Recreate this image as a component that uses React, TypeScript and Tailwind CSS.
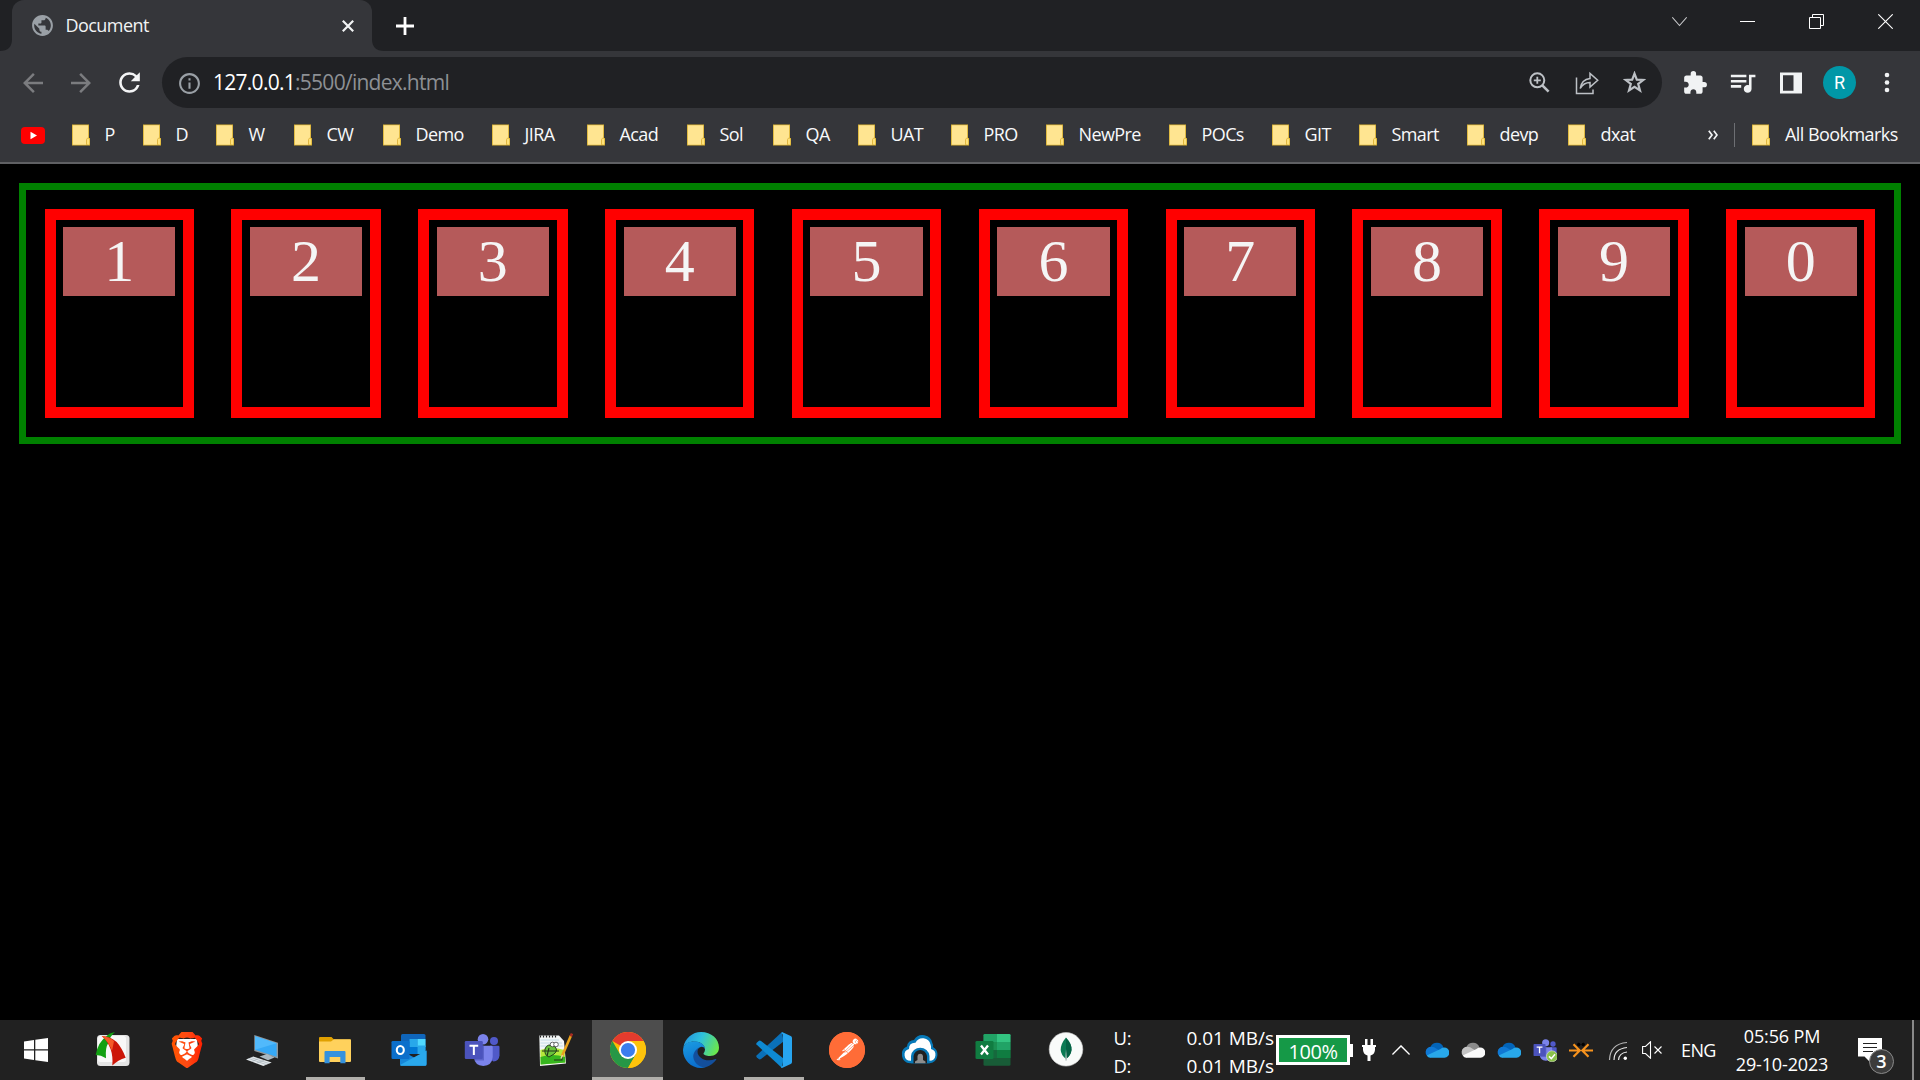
import React from "react";
import {
  MdPublic, MdRefresh, MdArrowBack, MdArrowForward, MdInfoOutline,
  MdExtension, MdQueueMusic,
} from "react-icons/md";
import { SiBrave, SiPostman } from "react-icons/si";

const FolderIcon = () => (
  <svg className="block h-[22px] w-[18px] shrink-0" viewBox="0 0 18 22">
    <path d="M0 0.5H17V14H18V21.5H0Z" fill="#d9b02f" />
    <path d="M0.8 1.3H16.2V15L14.5 16V20.7H0.8Z" fill="#ffe591" />
    <rect x="15" y="14.5" width="2.3" height="6.2" rx="1" fill="#ffe27a" />
    <path d="M14.5 20.5V15.5Q14.8 14 16.5 14" stroke="#e0b43c" fill="none" strokeWidth="0.9" />
  </svg>
);

const bookmarks: { label: string; slot: string }[] = [
  { label: "P", slot: "w-[71px]" },
  { label: "D", slot: "w-[73px]" },
  { label: "W", slot: "w-[78px]" },
  { label: "CW", slot: "w-[89px]" },
  { label: "Demo", slot: "w-[109px]" },
  { label: "JIRA", slot: "w-[95px]" },
  { label: "Acad", slot: "w-[100px]" },
  { label: "Sol", slot: "w-[86px]" },
  { label: "QA", slot: "w-[85px]" },
  { label: "UAT", slot: "w-[93px]" },
  { label: "PRO", slot: "w-[95px]" },
  { label: "NewPre", slot: "w-[123px]" },
  { label: "POCs", slot: "w-[103px]" },
  { label: "GIT", slot: "w-[87px]" },
  { label: "Smart", slot: "w-[108px]" },
  { label: "devp", slot: "w-[101px]" },
  { label: "dxat", slot: "w-[100px]" },
];

function TabStrip() {
  return (
    <div className="flex h-[51px] bg-[#202124]">
      <svg className="block h-[51px] w-[12px]" viewBox="0 0 12 51"><path d="M12 51H0Q12 51 12 39Z" fill="#35363a" /></svg>
      <div className="flex h-[51px] w-[360px] items-center rounded-t-[12px] bg-[#35363a] pl-[17.5px]">
        <MdPublic className="size-[25px] text-[#9aa0a6]" />
        <span className="ml-[11px] w-[276px] pb-[1px] text-[18px] leading-none tracking-[-0.55px] text-[#f1f3f4]">Document</span>
        <svg className="block size-[12px]" viewBox="0 0 12 12"><path d="M0.8 0.8L11.2 11.2M11.2 0.8L0.8 11.2" stroke="#f1f3f4" strokeWidth="2.2" /></svg>
      </div>
      <svg className="block h-[51px] w-[12px]" viewBox="0 0 12 51"><path d="M0 51H12Q0 51 0 39Z" fill="#35363a" /></svg>
      <svg className="mt-[17px] ml-[12px] block size-[18px]" viewBox="0 0 18 18"><path d="M9 0V18M0 9H18" stroke="#fff" strokeWidth="2.8" /></svg>
      <svg className="mt-[14px] ml-[1258px] block size-[15px]" viewBox="0 0 15 15"><path d="M0.3 3.3L7.5 11.5L14.7 3.3" stroke="#c9cacc" strokeWidth="1.1" fill="none" /></svg>
      <svg className="mt-[14px] ml-[53px] block size-[15px]" viewBox="0 0 15 15"><path d="M0 7.5H15" stroke="#fff" /></svg>
      <svg className="mt-[14px] ml-[54px] block size-[15px]" viewBox="0 0 15 15"><path d="M0.5 3.5H11.5V14.5H0.5ZM3.5 3.5V0.5H14.5V11.5H11.5" stroke="#fff" fill="none" /></svg>
      <svg className="mt-[14px] ml-[54px] block size-[15px]" viewBox="0 0 15 15"><path d="M0.3 0.3L14.7 14.7M14.7 0.3L0.3 14.7" stroke="#fff" strokeWidth="1.1" /></svg>
    </div>
  );
}

function Toolbar() {
  return (
    <div className="flex h-[63px] items-center bg-[#35363a]">
      <MdArrowBack className="ml-[18px] size-[30px] text-[#7b7c7f]" />
      <MdArrowForward className="ml-[18px] size-[30px] text-[#7b7c7f]" />
      <MdRefresh className="ml-[18px] size-[31px] text-[#f4f5f6]" />
      <div className="ml-[17px] flex h-[51px] w-[1500px] items-center rounded-full bg-[#202124] pl-[15px]">
        <MdInfoOutline className="mt-[2px] size-[25px] text-[#9aa0a6]" />
        <div className="ml-[11px] w-[1315.5px] text-[21px] leading-none tracking-[-0.73px] text-[#8d9094]">
          <span className="text-white">127.0.0.1</span>:5500/index.html
        </div>
        <svg className="block size-[21px]" viewBox="0 0 21 21" fill="none" stroke="#bdc1c6">
          <circle cx="8.3" cy="8.300" r="7" strokeWidth="2" />
          <path d="M8.300 4.800V11.800M4.800 8.300H11.800" strokeWidth="1.800" />
          <path d="M13.300 13.300L19.600 19.600" strokeWidth="2.600" />
        </svg>
        <svg className="ml-[25px] block size-[24px]" viewBox="0 0 24 24" fill="none" stroke="#bdc1c6" strokeWidth="1.5">
          <path d="M1.5 6.500V22.500H18V18.500" />
          <path d="M5.200 17.500Q6.500 8.500 15 7.500V2.500L22.700 9.300L15 16V11.500Q8.500 11.500 5.200 17.500Z" />
        </svg>
        <svg className="ml-[24.500px] block size-[23px]" viewBox="0 0 23 23" fill="none" stroke="#bdc1c6" strokeWidth="2.200">
          <path d="M11.500 2.600L13.800 8.700L20.300 9L15.200 13L17 19.400L11.500 15.800L6 19.400L7.800 13L2.700 9L9.200 8.700Z" />
        </svg>
      </div>
      <MdExtension className="ml-[20px] size-[26px] text-[#f1f3f4]" />
      <MdQueueMusic className="ml-[19px] size-[31px] text-[#f1f3f4]" />
      <svg className="ml-[22px] block size-[22px]" viewBox="0 0 22 22"><path d="M0 0.5H22V21.5H0ZM3 3.2V18.8H13.5V3.2Z" fill="#f1f3f4" fillRule="evenodd" /></svg>
      <div className="ml-[21px] flex size-[33px] items-center justify-center rounded-full bg-[#0097a7] font-['Roboto'] text-[18px] leading-none text-white">R</div>
      <svg className="ml-[28px] block h-[21px] w-[6px]" viewBox="0 0 6 21" fill="#f1f3f4"><circle cx="3" cy="3" r="2.3" /><circle cx="3" cy="10.5" r="2.3" /><circle cx="3" cy="18" r="2.3" /></svg>
    </div>
  );
}

function BookmarksBar() {
  return (
    <div className="flex h-[50px] items-center border-b-2 border-[#5f6063] bg-[#35363a] pb-[6px] text-[18px] leading-none text-[#f8f9fa]">
      <svg className="ml-[21px] block h-[17px] w-[24px]" viewBox="0 0 24 17"><rect width="24" height="17" rx="4" fill="#f00" /><path d="M9.5 4.8V12.2L16 8.5Z" fill="#fff" /></svg>
      <div className="ml-[27px] flex">
        {bookmarks.map((b) => (
          <div key={b.label} className={`flex shrink-0 items-center gap-[14.500px] tracking-[-0.6px] whitespace-nowrap ${b.slot}`}>
            <FolderIcon />
            <span className="pb-[2px]">{b.label}</span>
          </div>
        ))}
      </div>
      <svg className="ml-[40px] block h-[10px] w-[10px]" viewBox="0 0 10 10"><path d="M0.8 0.8L4 5L0.8 9.2M5.8 0.8L9 5L5.8 9.2" stroke="#f1f3f4" strokeWidth="1.7" fill="none" /></svg>
      <div className="ml-[16px] h-[24px] w-px bg-[#6d6f73]" />
      <div className="ml-[17px] flex items-center gap-[15px] tracking-[-0.55px] whitespace-nowrap"><FolderIcon /><span className="pb-[2px]">All Bookmarks</span></div>
    </div>
  );
}

function PageContent() {
  return (
    <main className="flex-1 bg-black px-[18.75px] pt-[19px]">
      <div className="flex h-[261px] border-[7px] border-[#008000]">
        {["1", "2", "3", "4", "5", "6", "7", "8", "9", "0"].map((n) => (
          <div key={n} className="m-[18.75px] h-[209px] flex-1 border-[11px] border-[#ff0000] p-[7.5px]">
            <div className="h-[69px] bg-[#b55a5a] text-center font-['Liberation_Serif'] text-[60px] leading-[69px] text-[#f5f5f5]">{n}</div>
          </div>
        ))}
      </div>
    </main>
  );
}

const box = "block size-[36px]";

const FastStone = () => (
  <svg className={box} viewBox="0 0 36 36">
    <rect x="2" y="3" width="32.5" height="31" rx="3.5" fill="#e4e4e4" />
    <rect x="3" y="4" width="28" height="26" rx="2.5" fill="#f8f8f8" />
    <path d="M0.7 23Q3 10 11.7 4Q14 1 20 0Q15 4 13.3 11Q10 16 11 26.3Q6 23 0.7 23Z" fill="#12a012" />
    <path d="M6.7 4Q15 4 21.7 10Q27 16 30.7 25.7Q23 28 17.3 33.5Q19 15 6.7 4Z" fill="#cc1608" />
    <path d="M6.7 4Q14 4.500 19 9L17 19Q14 10 6.700 4Z" fill="#f55a28" />
  </svg>
);
const Brave = () => (
  <div className="grid size-[36px] place-items-center">
    <svg className="col-start-1 row-start-1 block size-[36px]" viewBox="0 0 36 36">
      <defs><linearGradient id="brave"><stop stopColor="#ff5500" /><stop offset="0.5" stopColor="#ff4a14" /><stop offset="1" stopColor="#ff2000" /></linearGradient></defs>
      <path d="M8 7H28L29 16L24 26L18 30L12 26L7 16Z" fill="#fff" />
    </svg>
    <SiBrave className="col-start-1 row-start-1 size-[36px]" fill="url(#brave)" />
  </div>
);
const Computer = () => (
  <svg className={box} viewBox="0 0 36 36">
    <path d="M10.300 3L34 10.700V26.600L10.300 18.900Z" fill="#8f979c" />
    <path d="M11 4.300L32.600 11.300V24.700L11 17.800Z" fill="#36a9f6" />
    <path d="M11 4.300L32.600 11.300L11 17.800Z" fill="#51b9fb" />
    <path d="M15.500 24.500L23 22L30.500 25.500L24 28.300Z" fill="#aab9c2" />
    <path d="M2 27.500L9.300 24.500L27.700 30.500L19.300 34Z" fill="#e4e9ec" />
    <path d="M4.500 26.500L22 32.500M7 25.500L25 31.500M8 29.500L14.500 26.500M13 31L20 28.300" stroke="#9daab2" strokeWidth="0.600" />
  </svg>
);
const Explorer = () => (
  <svg className={box} viewBox="0 0 36 36">
    <path d="M2 6Q2 5 3 5H14.500L17 7.500H33Q34 7.500 34 8.500V12H2Z" fill="#e0a000" />
    <path d="M2 9.500H14L17 7.200H33Q34 7.200 34 8.200V29Q34 30 33 30H3Q2 30 2 29Z" fill="#ffd15c" />
    <path d="M7.500 31.300V20Q7.500 19 8.500 19H27.500Q28.500 19 28.500 20V31.300H23.300V25H12.600V31.300Z" fill="#3592dd" />
  </svg>
);
const Outlook = () => (
  <svg className={box} viewBox="0 0 36 36">
    <rect x="10" y="2" width="24.500" height="20" rx="1.500" fill="#0f65ba" />
    <path d="M18.500 7H26.500V15H18.500Z" fill="#28a8ea" /><path d="M26.500 7H34.500V15H26.500Z" fill="#50d9ff" />
    <path d="M18.500 15H26.500V22H18.500Z" fill="#0078d4" /><path d="M26.500 13.500H34.500V22H26.500Z" fill="#28a8ea" />
    <path d="M9 18L26 27L35.500 18.500V32.300Q35.500 33.800 34 33.800H10.500Q9 33.800 9 32.300Z" fill="#1687d9" />
    <path d="M9 33L35.500 18.500V32.300Q35.500 33.800 34 33.800H10Z" fill="#2aa8ec" />
    <rect x="0.500" y="9" width="18" height="18" rx="1.300" fill="#0c6fcb" />
    <ellipse cx="9.300" cy="18" rx="3.500" ry="4" stroke="#fff" strokeWidth="2.100" fill="none" />
  </svg>
);
const TeamsShape = () => (
  <>
    <circle cx="19" cy="7.300" r="5.300" fill="#7b83eb" />
    <circle cx="30" cy="9" r="4" fill="#5059c9" />
    <path d="M26 13.700H34.300Q35.500 13.700 35.500 15V23.500Q35 29 29.500 29.500L26 27Z" fill="#5059c9" />
    <path d="M10 13.700H27.500Q28.700 13.700 28.700 15V25Q28 33.500 19.300 34Q10.500 33.500 10 25Z" fill="#7b83eb" />
    <path d="M10 13.700H20V28.500H11Z" fill="#5c64ca" />
    <rect x="0.800" y="9" width="18" height="18" rx="1.300" fill="#4b53bc" />
    <path d="M5.500 13.700H14.200M9.850 13.700V23" stroke="#fff" strokeWidth="2" />
  </>
);
const Teams = () => <svg className={box} viewBox="0 0 36 36"><TeamsShape /></svg>;
const Notepad = () => (
  <svg className={box} viewBox="0 0 36 36">
    <path d="M2.300 3.500H22L27 9L29 31.500L3 34Z" fill="#f3f7f7" />
    <path d="M3.500 8H22M3.500 11H25M3.500 14H26" stroke="#b9d5e2" strokeWidth="0.800" />
    <path d="M3.300 18Q14 14 27.500 18L28.300 30.500L3.700 32.600Z" fill="#b4e83a" />
    <path d="M3.500 25Q15 21 28 25L28.300 30.500L3.700 32.600Z" fill="#36b51e" />
    <path d="M8 17Q10 11 17 14Q22 18 17 22L12 25Q7 23 8 17Z" fill="#6ac23a" stroke="#24451b" strokeWidth="1" />
    <path d="M5 19H22M12 16L10 24M17 28H25V25" stroke="#24351b" strokeWidth="1.100" fill="none" />
    <circle cx="15.500" cy="12.500" r="2.300" fill="#fff" stroke="#333" strokeWidth="0.700" /><circle cx="19" cy="12.500" r="2.300" fill="#fff" stroke="#333" strokeWidth="0.700" />
    <path d="M3.500 3.500V5.500M6.500 3.500V5.500M9.500 3.500V5.500M12.500 3.500V5.500M15.500 3.500V5.500M18.500 3.500V5.500" stroke="#222" strokeWidth="1.200" />
    <path d="M34 3.500L25 24" stroke="#e8a21c" strokeWidth="2.600" /><path d="M35 1.500L33.700 4.400" stroke="#a82d22" strokeWidth="2.600" /><path d="M25.500 23L24 26.500" stroke="#e8cfa0" strokeWidth="1.500" />
  </svg>
);
const Chrome = () => (
  <svg className={box} viewBox="0 0 36 36">
    <circle cx="18" cy="18" r="18" fill="#fbbc05" />
    <path d="M18 18L2.410 9A18 18 0 0 1 33.590 9Z" fill="#e33b2e" />
    <path d="M10.200 22.500L2.410 9A18 18 0 0 0 18 36L25.800 22.500Z" fill="#269746" />
    <path d="M18 9H33.590A18 18 0 0 1 18 36L25.800 22.500Z" fill="#fdc30c" />
    <circle cx="18" cy="18" r="9" fill="#fff" /><circle cx="18" cy="18" r="7.100" fill="#3b7ded" />
  </svg>
);
const Edge = () => (
  <svg className={box} viewBox="0 0 36 36">
    <defs>
      <linearGradient id="edgeTop" x1="0" y1="0.300" x2="1" y2="0.600"><stop stopColor="#2394dd" /><stop offset="0.450" stopColor="#2fc2dc" /><stop offset="1" stopColor="#6be84a" /></linearGradient>
      <linearGradient id="edgeLeft" x1="0" y1="0" x2="0.300" y2="1"><stop stopColor="#1b9de2" /><stop offset="1" stopColor="#0b6fce" /></linearGradient>
    </defs>
    <path d="M0.300 15.500C2 6 9.500 0 18 0C28.500 0 36 7 36 15.500C36 21 32 24 27 24C23 24 20.500 22.700 20.500 21.500C20.500 20.800 22 20 22 17.500C22 13 17 9.500 11.500 9.500C6 9.500 2 12 0.300 15.500Z" fill="url(#edgeTop)" />
    <path d="M0 18C0.500 12 5.500 9.300 11.300 9.300C17 9.300 22 13 22 17Q21 14.800 18.500 14.800C14.500 15.500 11.500 20 12 25C12.500 30 16.500 34.500 22.500 35.300Q20 36 18 36C8 36 0 28 0 18Z" fill="url(#edgeLeft)" />
    <path d="M16.500 15.300C12.500 17.500 10 21.500 10.300 25C11 31 16 35.500 22.500 35.300C27 34 31 31 33.200 27.800C33.700 27 33 26.700 32.400 27C24 30.500 14.500 26.500 14.500 19.500Q14.500 17 16.500 15.300Z" fill="#134f9c" />
  </svg>
);
const Code = () => (
  <svg className={box} viewBox="0 0 36 36">
    <path d="M0.500 23.500L26 0L27.500 9.500L5 27Q3.800 27.800 2.700 27L0.700 25.200Q0 24.400 0.500 23.500Z" fill="#0a70b8" />
    <path d="M0.500 12.500L26 36L27.500 26.500L5 9Q3.800 8.200 2.700 9L0.700 10.800Q0 11.600 0.500 12.500Z" fill="#0e8ad3" />
    <path d="M26 0L34.700 4Q36 4.700 36 6V30Q36 31.300 34.700 32L26 36Q24.500 35.800 25.500 34.500Q27 34.500 27 32.500V3.500Q27 1.500 25.500 1.500Z" fill="#27a5f0" />
  </svg>
);
const Postman = () => (
  <div className="grid size-[36px] place-items-center rounded-full bg-[radial-gradient(circle,white_60%,#ff6c37_61%)]">
    <SiPostman className="size-[36px] text-[#ff6c37]" />
  </div>
);
const CloudTunnel = () => (
  <svg className={box} viewBox="0 0 36 36">
    <path d="M8 31.300A8.800 8.800 0 0 1 5 14.500A7 7 0 0 1 12 8A10 10 0 0 1 30.500 11.500Q31.500 13 31 15A8.800 8.800 0 0 1 28 31.300Z" fill="#0779b8" />
    <path d="M8.500 28.800A6 6 0 0 1 7 17Q7 10.500 13.500 10.700A8 8 0 0 1 28.500 12.500Q29.300 14 29 17A6 6 0 0 1 27.500 28.800Z" fill="#fff" />
    <path d="M9 31.300V24A9.300 9.300 0 0 1 27.500 24V31.300Z" fill="#0779b8" />
    <path d="M11.500 31.300V24A6.800 6.800 0 0 1 25 24V31.300Z" fill="#202020" />
    <path d="M13 31.300V29.500L15.500 28V24A2.800 2.800 0 0 1 21 24V28L23.500 29.500V31.300Z" fill="#8d8d8d" />
  </svg>
);
const Excel = () => (
  <svg className={box} viewBox="0 0 36 36">
    <rect x="8.500" y="2" width="27" height="31.800" rx="1.300" fill="#185c37" />
    <path d="M8.500 3.300Q8.500 2 9.800 2H22V10H8.500Z" fill="#21a366" /><path d="M22 2H34.200Q35.500 2 35.500 3.300V10H22Z" fill="#33c481" />
    <path d="M8.500 10H22V18H8.500Z" fill="#1b8f52" /><path d="M22 10H35.500V18H22Z" fill="#21a366" /><path d="M8.500 18H22V26H8.500Z" fill="#16693d" /><path d="M22 18H35.500V26H22Z" fill="#107c41" />
    <rect x="0.500" y="9" width="18" height="18" rx="1.300" fill="#107c41" />
    <path d="M6 13.500L13 22.500M13 13.500L6 22.500" stroke="#fff" strokeWidth="2.300" />
  </svg>
);
const Compass = () => (
  <svg className={box} viewBox="0 0 36 36">
    <circle cx="18" cy="17.300" r="16.800" fill="#f9fbfa" stroke="#c9c9c9" strokeWidth="0.600" />
    <path d="M18 5.500Q24 12 23.500 18Q22.500 23.500 18 27Q13 23 12.700 18Q12.500 12 18 5.500Z" fill="#0b7a54" />
    <path d="M18 6V27Q23 23.500 23.500 18Q24 12 18 6Z" fill="#056245" /><path d="M18 17L19 28.500H17.200Z" fill="#b8c4c2" />
  </svg>
);

const apps: { name: string; Icon: () => React.JSX.Element; state?: "open" | "active"; wide?: boolean }[] = [
  { name: "faststone", Icon: FastStone, wide: true },
  { name: "brave", Icon: Brave, wide: true },
  { name: "computer", Icon: Computer, wide: true },
  { name: "explorer", Icon: Explorer, state: "open" },
  { name: "outlook", Icon: Outlook },
  { name: "teams", Icon: Teams },
  { name: "notepad", Icon: Notepad },
  { name: "chrome", Icon: Chrome, state: "active" },
  { name: "edge", Icon: Edge },
  { name: "code", Icon: Code, state: "open" },
  { name: "postman", Icon: Postman },
  { name: "tunnel", Icon: CloudTunnel },
  { name: "excel", Icon: Excel },
  { name: "compass", Icon: Compass },
];

const Drive = ({ a, b, c }: { a: string; b: string; c: string }) => (
  <svg className="block h-[16px] w-[24px]" viewBox="0 0 24 16">
    <path d="M5.500 5A7 7 0 0 1 18.500 5.500L14 10L5 7Z" fill={a} />
    <path d="M5.500 15.500A5.300 5.300 0 0 1 6.500 4.800Q9 4.800 12 7L16 9.500L8 14Z" fill={b} />
    <path d="M1.700 13.500L15.500 7Q17 5.300 19 5.500A5 5 0 0 1 19.500 15.700H5.500Q3 15.700 1.700 13.500Z" fill={c} />
  </svg>
);

function Taskbar() {
  return (
    <footer className="flex h-[60px] items-center bg-[#212121] text-[18px] text-white">
      <svg className="ml-[24px] block size-[24px]" viewBox="0 0 24 24" fill="#fff"><path d="M0 3.400L10 2V11.300H0ZM11.300 1.800L24 0V11.300H11.300ZM0 12.600H10V22L0 20.600ZM11.300 12.600H24V24L11.300 22.200Z" /></svg>
      <div className="ml-[28px] flex h-full w-[1028px] shrink-0">
        {apps.map(({ name, Icon, state, wide }) => (
          <div key={name} className={`flex h-full shrink-0 justify-center ${wide ? "w-[74.3px]" : "w-[73.1px]"}`}>
            <div className={`flex h-full flex-col items-center pt-[12px] ${state === "active" ? "w-[71px] bg-[#4d4d4d]" : "w-[59.500px]"}`}>
              <Icon />
              {state && <div className="mt-auto h-[3px] w-full bg-[#b1afab]" />}
            </div>
          </div>
        ))}
      </div>
      <div className="ml-[9.500px] w-[73px] shrink-0 pt-[3px] text-[18.5px] leading-[28px] tracking-[-0.300px]"><div>U:</div><div>D:</div></div>
      <div className="w-[89.500px] shrink-0 pt-[3px] text-[19px] leading-[28px] tracking-[-0.050px] whitespace-nowrap"><div>0.01 MB/s</div><div>0.01 MB/s</div></div>
      <div className="flex h-[30px] w-[74px] shrink-0 items-center justify-center border-[3px] border-white bg-[#159947] pt-[3px] text-[20px] leading-none tracking-[-0.400px]">100%</div>
      <div className="h-[13px] w-[3px] shrink-0 bg-white" />
      <svg className="ml-[9px] block h-[22px] w-[14px] shrink-0" viewBox="0 0 14 22" fill="#fff"><path d="M3 0H5.500V6H8.500V0H11V6H14V8H13V11Q12.500 15.500 8.500 16.500V22H5.500V16.500Q1.500 15.500 1 11V8H0V6H3Z" /></svg>
      <svg className="ml-[16px] block h-[10px] w-[18px] shrink-0" viewBox="0 0 18 10"><path d="M0.400 9.500L9 0.900L17.600 9.500" stroke="#fff" strokeWidth="1.400" fill="none" /></svg>
      <div className="ml-[15px] flex shrink-0 items-center gap-[12px]">
        <Drive a="#0364b8" b="#0f78d4" c="#28a8ea" />
        <Drive a="#8a8a8a" b="#c4c4c4" c="#fafafa" />
        <Drive a="#0364b8" b="#0f78d4" c="#28a8ea" />
        <svg className="block size-[24px]" viewBox="0 0 36 36"><TeamsShape /><circle cx="28.500" cy="27.500" r="8.300" fill="#8ac14b" stroke="#e6f2d8" strokeWidth="0.800" /><path d="M24 27.500L27.500 31L33 24.500" stroke="#fff" strokeWidth="2.300" fill="none" /></svg>
        <svg className="block h-[24px] w-[24px]" viewBox="0 0 24 24" fill="none" stroke="#f7931e" strokeWidth="2.200"><path d="M0 12.500H10.500M13.500 12.500H24M4.500 6.300L10.700 12.500L4.500 18.700M19.500 6.300L13.300 12.500L19.500 18.700" /><circle cx="9.800" cy="6.500" r="1.300" fill="#000" stroke="#000" strokeWidth="1" /><circle cx="14.200" cy="6.500" r="1.300" fill="#000" stroke="#000" strokeWidth="1" /></svg>
      </div>
      <svg className="mt-[2px] ml-[15px] block size-[20px] shrink-0" viewBox="0 0 20 20" fill="none" stroke="#e8e8e8" strokeWidth="1.200"><path d="M1.500 19Q2 3 19 1.500" stroke="#b5b5b5" /><path d="M6 19Q6 8 19 6.500M10.500 19Q11 12 19 11" /><circle cx="17.300" cy="17.300" r="1.700" fill="#fff" stroke="none" /></svg>
      <svg className="ml-[14px] block h-[18px] w-[20px] shrink-0" viewBox="0 0 20 18" fill="none" stroke="#fff" strokeWidth="1.100"><path d="M0.600 5.500H3.500L8.500 0.800V17.200L3.500 12.500H0.600ZM12.500 5.500L19.500 12.500M19.500 5.500L12.500 12.500" /></svg>
      <span className="ml-[19px] w-[54.500px] shrink-0 tracking-[-0.600px]">ENG</span>
      <div className="w-[93px] shrink-0 text-center leading-[28px] tracking-[-0.150px] whitespace-nowrap"><div>05:56 PM</div><div>29-10-2023</div></div>
      <svg className="mt-[13px] ml-[29px] block h-[37px] w-[38px] shrink-0" viewBox="0 0 38 37">
        <path d="M0 0H24V18.500H13V25L6.500 18.500H0Z" fill="#fff" /><path d="M5 5.500H19M5 9.500H19M5 13.500H15" stroke="#222" strokeWidth="1.200" />
        <circle cx="23.500" cy="23.500" r="12" fill="#3c3c3c" stroke="#8a8a8a" />
        <text x="23.500" y="29.700" textAnchor="middle" fontSize="18" fontWeight="600" fill="#fff">3</text>
      </svg>
      <div className="mr-[6px] ml-auto h-full w-[2px] shrink-0 bg-[#8a8a8a]" />
    </footer>
  );
}

export default function App() {
  return (
    <div className="flex h-[1080px] w-[1920px] flex-col overflow-hidden bg-black font-['Open_Sans','Noto_Sans',sans-serif]">
      <TabStrip />
      <Toolbar />
      <BookmarksBar />
      <PageContent />
      <Taskbar />
    </div>
  );
}
